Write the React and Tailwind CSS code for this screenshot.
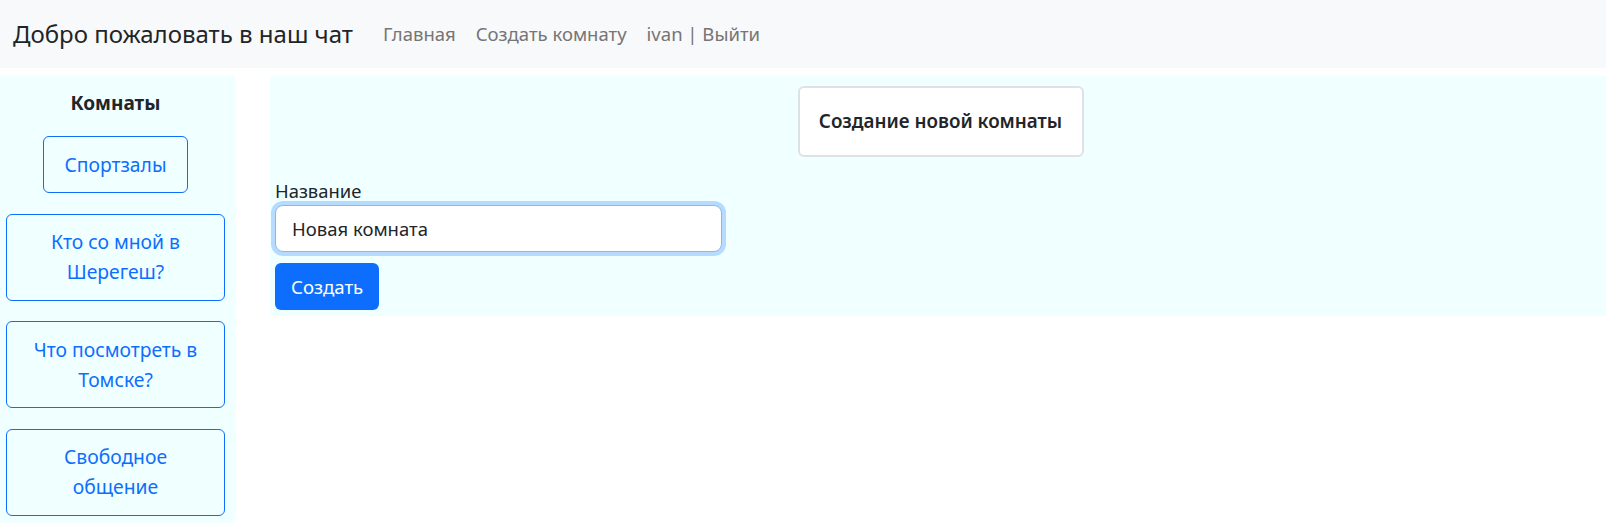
import React from "react";

const rooms = [
  { id: 1, name: "Спортзалы", narrow: true },
  { id: 2, name: "Кто со мной в Шерегеш?" },
  { id: 3, name: "Что посмотреть в Томске?" },
  { id: 4, name: "Свободное общение" },
];

const Navbar = () => {
  return (
    <nav className="h-[68px] bg-[#f8f9fa] flex items-center pl-[13px]">
      <span className="text-[24px] text-[#212529] mr-[30px]">Добро пожаловать в наш чат</span>
      <div className="flex items-center gap-x-[20px] text-[18.5px] text-[#757575]">
        <a href="#">Главная</a>
        <a href="#">Создать комнату</a>
        <a href="#">ivan | Выйти</a>
      </div>
    </nav>
  );
};

const Sidebar = () => {
  return (
    <aside className="w-[235px] shrink-0 bg-[#f0ffff] pl-[6px] pr-[10px] pt-[12px] pb-[8px]">
      <h5 className="text-center text-[19px] font-bold leading-[30px] text-[#212529] mb-[18px]">Комнаты</h5>
      <div className="flex flex-col items-center gap-y-[20.5px]">
        {rooms.map((room) => (
          <button
            key={room.id}
            className={`${room.narrow ? "px-5" : "w-full px-4"} py-[12.5px] border border-[#0d6efd] rounded-[6px] text-[19.3px] leading-[30px] text-[#0d6efd] text-center`}
          >
            {room.name}
          </button>
        ))}
      </div>
    </aside>
  );
};

const CreateRoom = () => {
  return (
    <main className="flex-1 self-start ml-[35px] bg-[#f0ffff] pl-[5px] pt-[10px] pb-[6px]">
      <div className="mx-auto w-[286px] h-[71px] flex items-center justify-center bg-white border-2 border-[#dee2e6] rounded-[6px]">
        <span className="text-[18.8px] font-semibold text-[#212529]">Создание новой комнаты</span>
      </div>
      <form className="mt-[22px]">
        <label className="block text-[18.4px] leading-[24px] text-[#212529]">Название</label>
        <input
          type="text"
          defaultValue="Новая комната"
          className="mt-[2px] block w-[447px] h-[47px] px-4 bg-white border border-[#86b7fe] rounded-[8px] text-[18.5px] text-[#212529] shadow-[0_0_0_4px_rgba(13,110,253,0.25)] outline-none"
        />
        <button
          type="button"
          className="mt-[11px] h-[47px] px-4 bg-[#0d6efd] text-white text-[18.6px] rounded-[6px]"
        >
          Создать
        </button>
      </form>
    </main>
  );
};

export default function App() {
  return (
    <div className="min-h-[523px] bg-white font-['Noto_Sans',sans-serif]">
      <Navbar />
      <div className="flex mt-[8px]">
        <Sidebar />
        <CreateRoom />
      </div>
    </div>
  );
}
